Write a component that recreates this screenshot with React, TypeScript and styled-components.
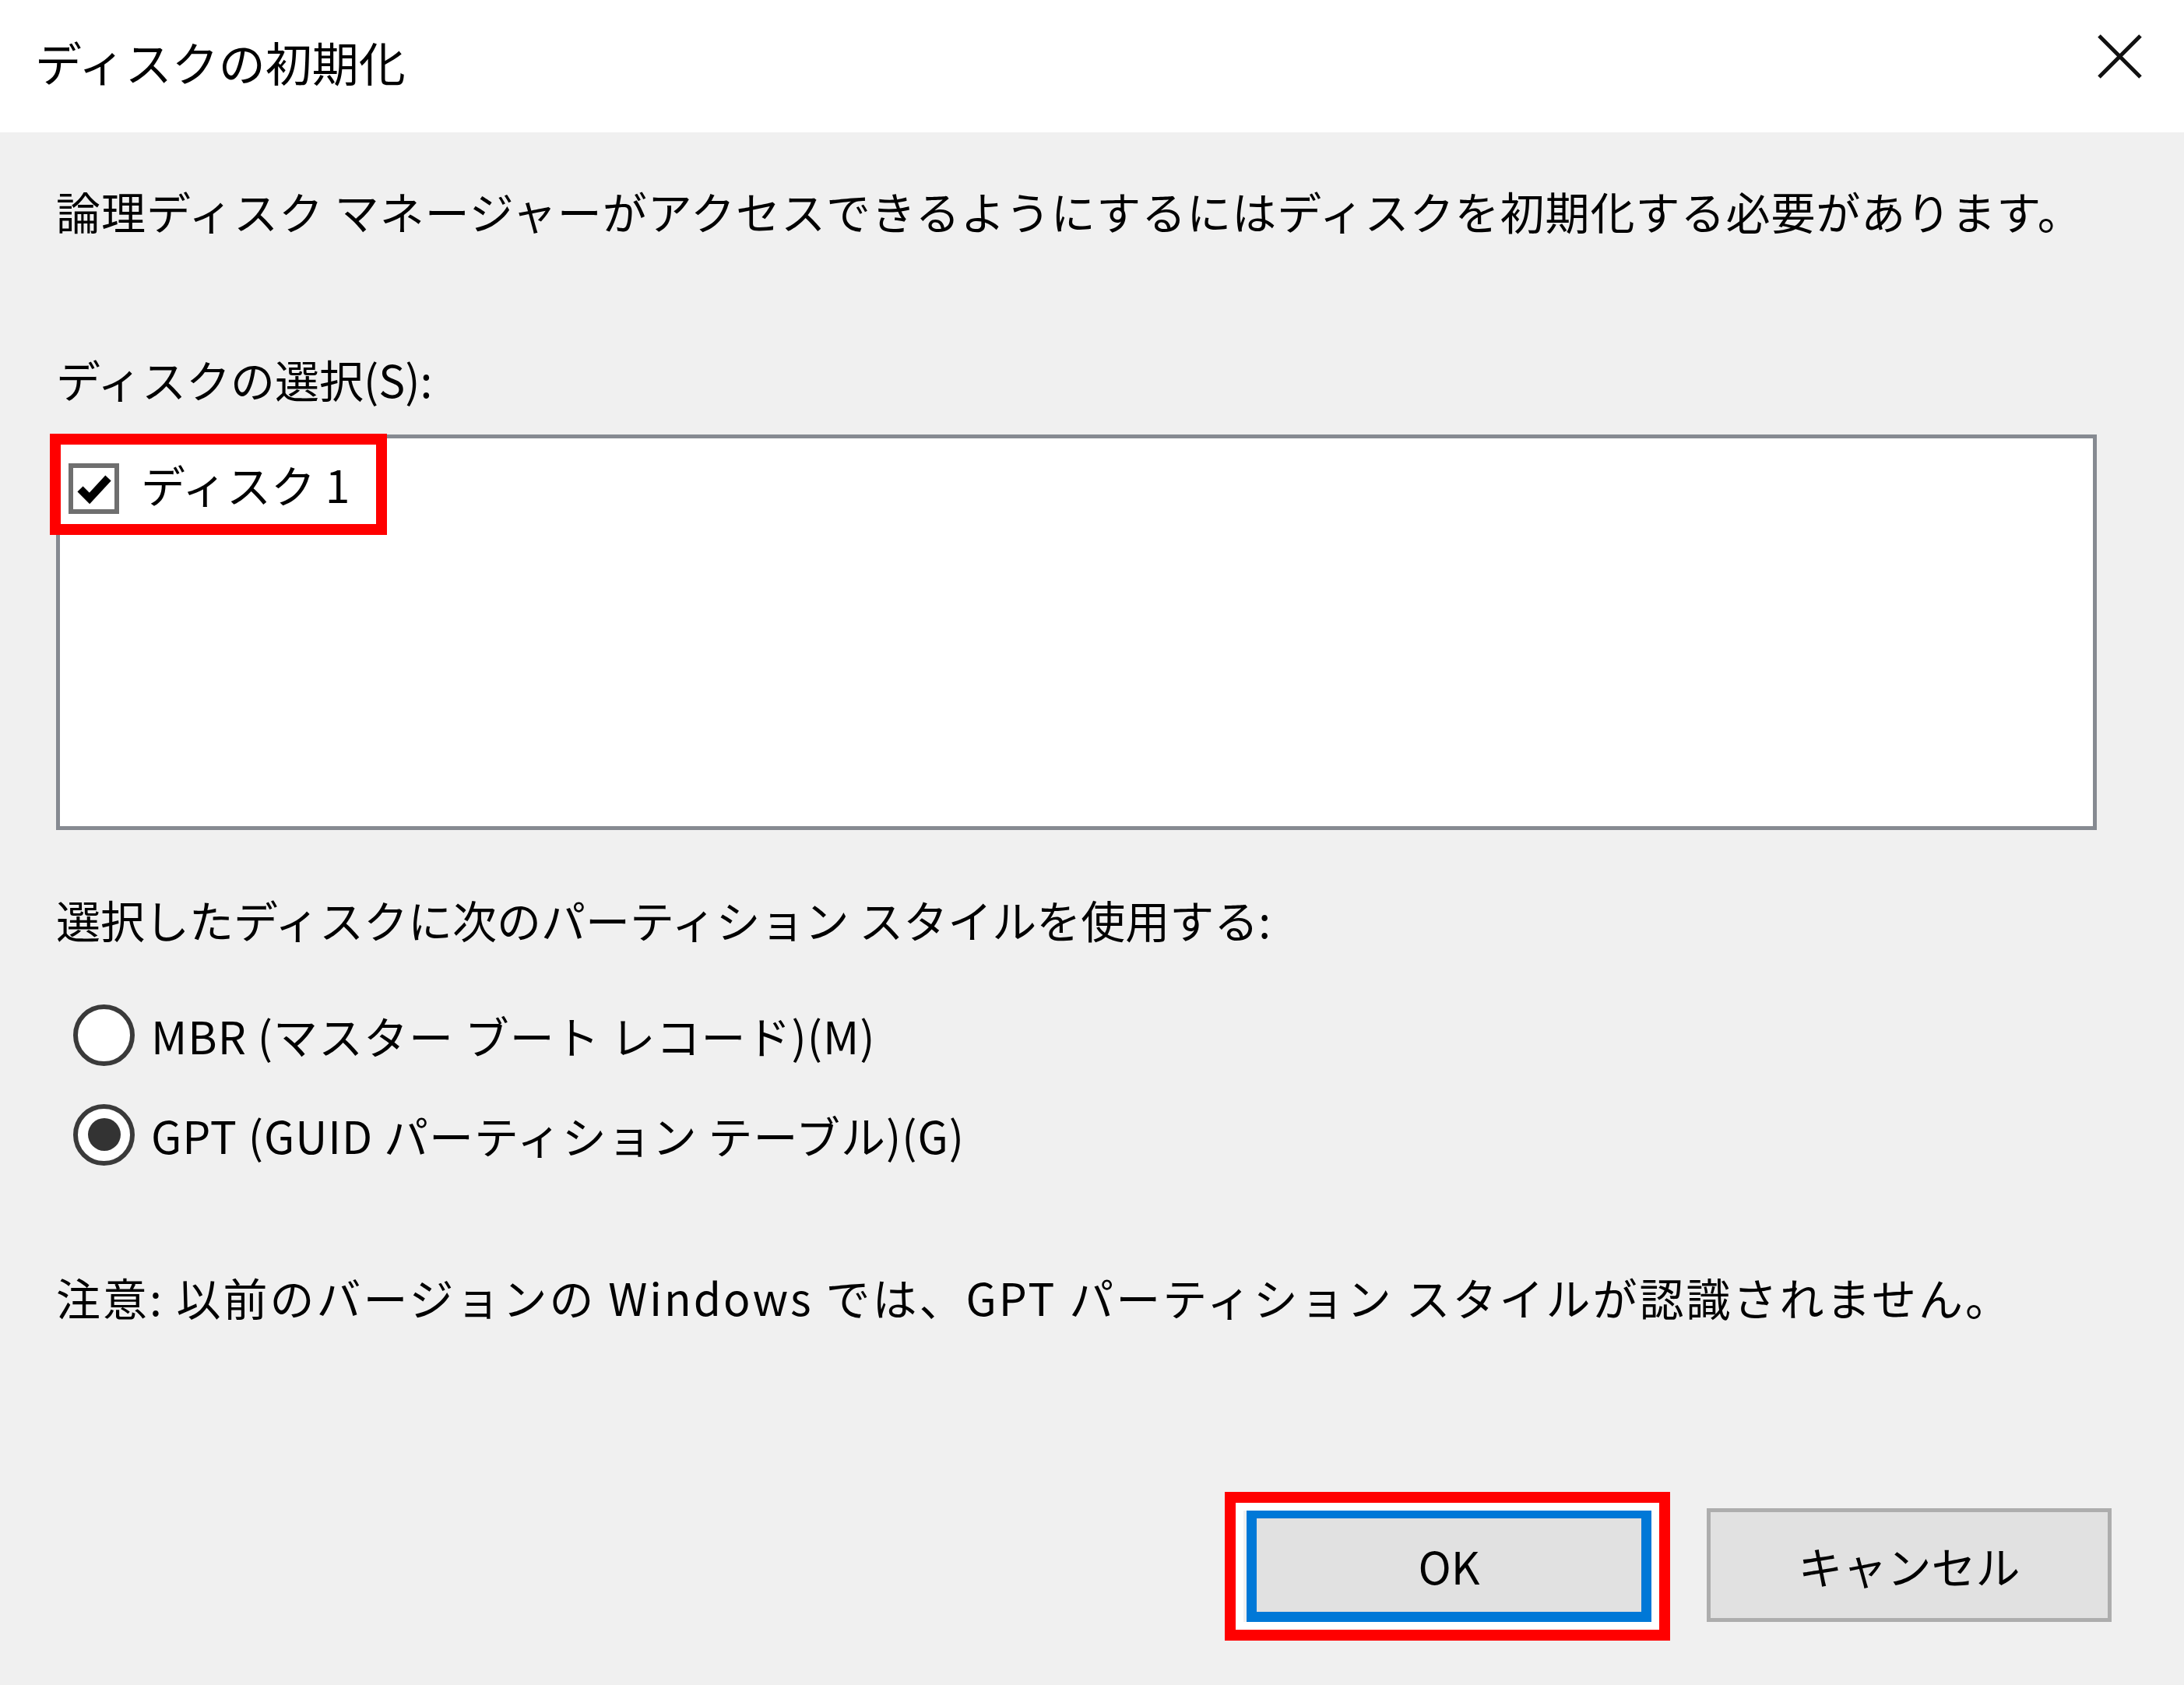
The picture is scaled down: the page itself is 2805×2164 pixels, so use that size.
import styled, { createGlobalStyle } from "styled-components";

const GlobalStyle = createGlobalStyle`
  html, body {
    margin: 0;
    padding: 0;
    background: #f0f0f0;
  }
  body {
    font-family: "Noto Sans CJK JP", "Noto Sans", sans-serif;
    color: #000;
  }
`;

const Window = styled.div`
  width: 2805px;
  height: 2164px;
  display: flex;
  flex-direction: column;
  background: #f0f0f0;
  overflow: hidden;
`;

const TitleBar = styled.div`
  height: 170px;
  flex-shrink: 0;
  background: #fff;
  display: flex;
  align-items: center;
  justify-content: space-between;
  padding: 0 54px 0 45px;
  box-sizing: border-box;
`;

const Title = styled.div`
  font-size: 60px;
  line-height: 1;
  margin-top: -12px;
`;

const CloseButton = styled.div`
  width: 57px;
  height: 57px;
  margin-top: -26px;
  display: flex;
  align-items: center;
  justify-content: center;
`;

const Body = styled.div`
  flex: 1;
  display: flex;
  flex-direction: column;
  padding: 63px 93px 0 72px;
`;

const Text = styled.div<{ $top?: number; $spacing?: number }>`
  font-size: 57px;
  line-height: 74px;
  white-space: nowrap;
  margin-top: ${({ $top }) => $top ?? 0}px;
  letter-spacing: ${({ $spacing }) => $spacing ?? 0}px;
`;

const ListBox = styled.div`
  position: relative;
  margin-top: 35px;
  margin-right: 19px;
  height: 508px;
  box-sizing: border-box;
  border: 5px solid #868a91;
  background: #fff;
  padding: 32px 0 0 11px;
`;

const CheckItem = styled.div`
  position: relative;
  display: flex;
  align-items: center;
  gap: 28px;
  height: 65px;
`;

const CheckBox = styled.div`
  width: 65px;
  height: 65px;
  box-sizing: border-box;
  border: 6px solid #6f6f6f;
  background: #fff;
  display: flex;
  align-items: center;
  justify-content: center;
`;

const ItemLabel = styled.span`
  font-size: 57px;
  line-height: 74px;
  margin-top: -14px;
`;

const Highlight = styled.div<{ $inset: string; $w?: number; $h?: number }>`
  position: absolute;
  ${({ $inset }) => $inset};
  ${({ $w }) => ($w ? `width: ${$w}px;` : "")}
  ${({ $h }) => ($h ? `height: ${$h}px;` : "")}
  box-sizing: border-box;
  border: 14px solid #ff0000;
  box-shadow: inset 0 0 0 10px #fff;
  pointer-events: none;
`;

const RadioGroup = styled.div`
  display: flex;
  flex-direction: column;
  gap: 38px;
  margin-top: 67px;
  padding-left: 22px;
`;

const RadioRow = styled.div`
  display: flex;
  align-items: center;
  gap: 21px;
  height: 90px;
`;

const Radio = styled.div<{ $checked?: boolean }>`
  width: 79px;
  height: 79px;
  box-sizing: border-box;
  border-radius: 50%;
  border: 6px solid #3a3a3a;
  background: #fff;
  display: flex;
  align-items: center;
  justify-content: center;

  &::after {
    content: "";
    width: 42px;
    height: 42px;
    border-radius: 50%;
    background: ${({ $checked }) => ($checked ? "#333" : "transparent")};
  }
`;

const RadioLabel = styled.span`
  font-size: 57px;
  line-height: 74px;
  white-space: nowrap;
  letter-spacing: 1px;
`;

const ButtonRow = styled.div`
  display: flex;
  justify-content: flex-end;
  gap: 71px;
  margin-top: 235px;
`;

const ButtonWrap = styled.div`
  position: relative;
`;

const Button = styled.button<{ $default?: boolean }>`
  width: 520px;
  height: 146px;
  box-sizing: border-box;
  background: #e1e1e1;
  border: ${({ $default }) => ($default ? "13px solid #0078d7" : "5px solid #adadad")};
  font-family: "Noto Sans CJK JP", "Noto Sans", sans-serif;
  font-size: 57px;
  color: #000;
  padding: 0;
  display: flex;
  align-items: center;
  justify-content: center;
`;

export default function App() {
  return (
    <>
      <GlobalStyle />
      <Window>
        <TitleBar>
          <Title>ディスクの初期化</Title>
          <CloseButton>
            <svg width="57" height="57" viewBox="0 0 57 57">
              <path d="M2 2 L55 55 M55 2 L2 55" stroke="#111" strokeWidth="5" fill="none" />
            </svg>
          </CloseButton>
        </TitleBar>
        <Body>
          <Text $spacing={1}>論理ディスク マネージャーがアクセスできるようにするにはディスクを初期化する必要があります。</Text>
          <Text $top={142}>ディスクの選択(S):</Text>
          <ListBox>
            <CheckItem>
              <CheckBox>
                <svg width="44" height="40" viewBox="0 0 44 40">
                  <path d="M4 20 L16 32 L40 6" stroke="#000" strokeWidth="10" fill="none" strokeLinejoin="miter" />
                </svg>
              </CheckBox>
              <ItemLabel>ディスク 1</ItemLabel>
              <Highlight $inset="left: -24px; top: -38px;" $w={433} $h={130} />
            </CheckItem>
          </ListBox>
          <Text $top={77}>選択したディスクに次のパーティション スタイルを使用する:</Text>
          <RadioGroup>
            <RadioRow>
              <Radio />
              <RadioLabel>MBR (マスター ブート レコード)(M)</RadioLabel>
            </RadioRow>
            <RadioRow>
              <Radio $checked />
              <RadioLabel>GPT (GUID パーティション テーブル)(G)</RadioLabel>
            </RadioRow>
          </RadioGroup>
          <Text $top={126} $spacing={3}>注意: 以前のバージョンの Windows では、GPT パーティション スタイルが認識されません。</Text>
          <ButtonRow>
            <ButtonWrap>
              <Button $default>OK</Button>
              <Highlight $inset="left: -28px; top: -21px; right: -24px; bottom: -24px;" />
            </ButtonWrap>
            <ButtonWrap>
              <Button>キャンセル</Button>
            </ButtonWrap>
          </ButtonRow>
        </Body>
      </Window>
    </>
  );
}
